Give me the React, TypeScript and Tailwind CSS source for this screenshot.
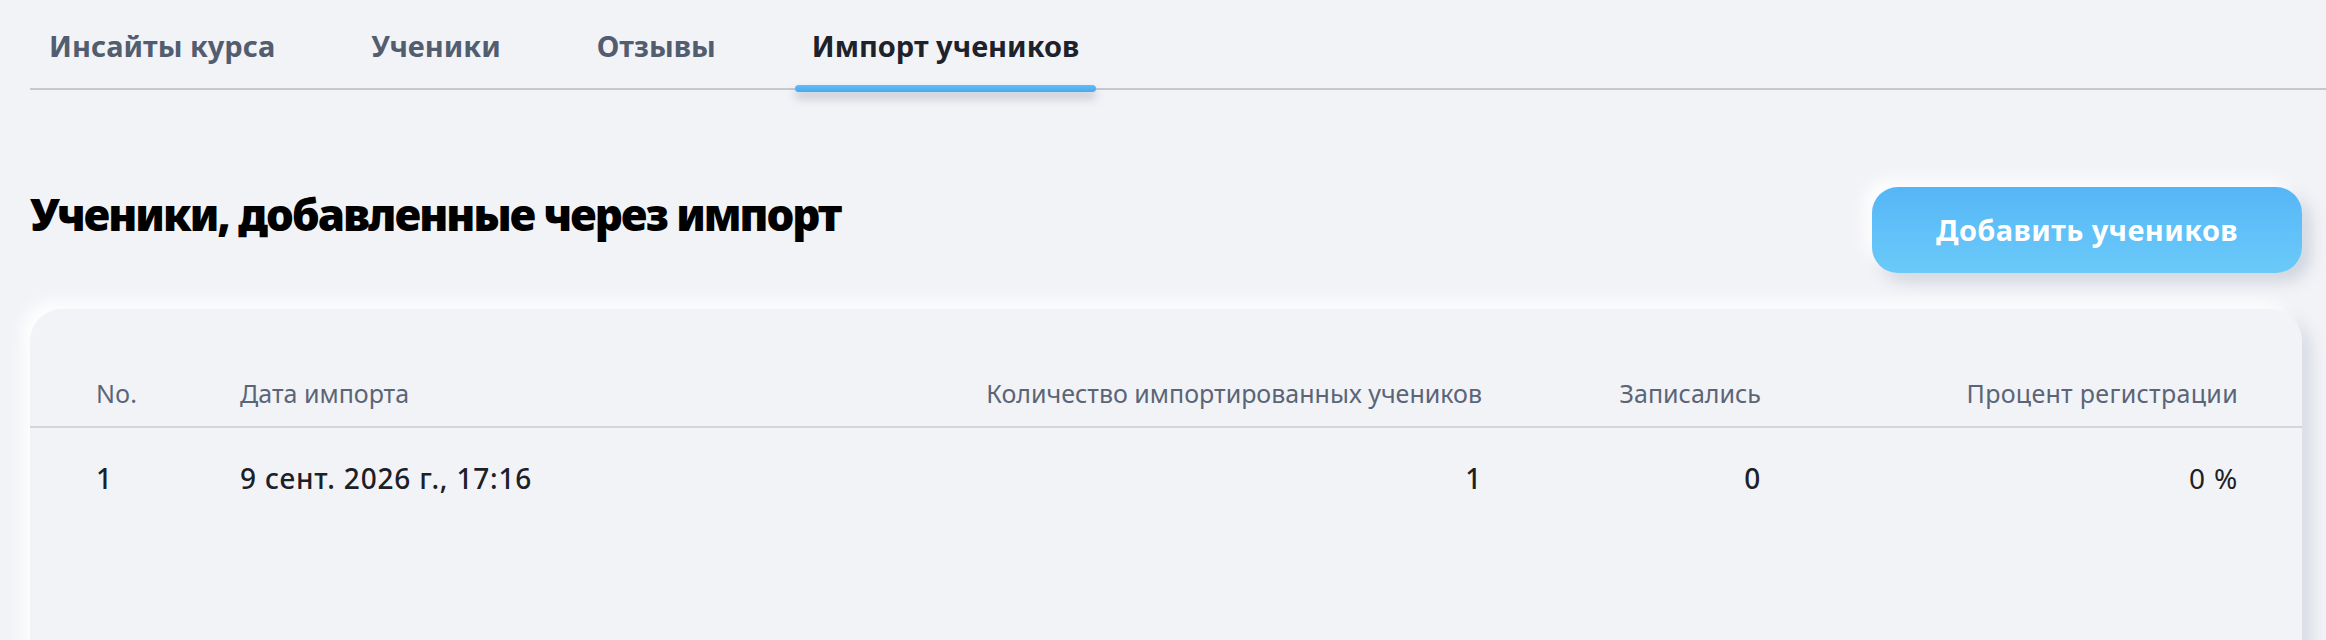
import React from 'react';

const tabs = [
  { id: 'insights', label: 'Инсайты курса' },
  { id: 'students', label: 'Ученики' },
  { id: 'reviews', label: 'Отзывы' },
  { id: 'import', label: 'Импорт учеников' },
];

const imports = [
  { no: 1, date: '9 сент. 2026 г., 17:16', imported: 1, enrolled: 0, rate: '0 %' },
];

const font = { fontFamily: '"Noto Sans", Roboto, sans-serif' };

export default function App() {
  const active = 'import';

  return (
    <div className="min-h-screen bg-[#f2f3f7] pl-[30px]" style={font}>
      {/* Tabs */}
      <div className="flex gap-[62px] border-b-2 border-[#c6c8cb] pl-[2px]">
        {tabs.map(tab => (
          <div key={tab.id} className="relative h-[88px] px-[17px] pt-[27px]">
            <span
              className={`block text-[29px] leading-[38px] font-bold ${
                tab.id === active ? 'text-[#1d222b]' : 'text-[#535d70]'
              }`}
            >
              {tab.label}
            </span>
            {tab.id === active && (
              <div className="absolute left-0 right-0 bottom-[-4px] h-[7px] rounded-full bg-gradient-to-b from-[#5fbdf8] to-[#4aa9f0] shadow-[0_6px_10px_rgba(90,100,120,0.35)]" />
            )}
          </div>
        ))}
      </div>

      <div className="pr-[24px]">
        {/* Title row */}
        <div className="mt-[97px] flex items-start justify-between">
          <h1 className="mt-[1px] text-[44px] leading-[52px] font-black tracking-[-2px] text-black">
            Ученики, добавленные через импорт
          </h1>
          <button className="h-[86px] w-[430px] rounded-[26px] bg-gradient-to-b from-[#55b6f7] to-[#6bcaf9] text-[29px] font-bold tracking-[0.4px] text-white shadow-[-8px_-8px_16px_rgba(255,255,255,0.95),8px_8px_16px_rgba(190,196,208,0.7)]">
            Добавить учеников
          </button>
        </div>

        {/* Table card */}
        <div className="mt-[36px] min-h-[400px] rounded-[32px] bg-[#f2f3f7] shadow-[-8px_-8px_16px_rgba(255,255,255,0.95),8px_8px_16px_rgba(200,205,216,0.75)]">
          <div className="grid grid-cols-[144px_1fr_auto_279px_477px] border-b-2 border-[#d4d6db] pl-[66px] pr-[64px] pt-[66px] pb-[15px] text-[25px] leading-[36px] text-[#5a6577]">
            <div>No.</div>
            <div>Дата импорта</div>
            <div className="text-right">Количество импортированных учеников</div>
            <div className="text-right">Записались</div>
            <div className="text-right tracking-[0.3px]">Процент регистрации</div>
          </div>
          {imports.map(row => (
            <div
              key={row.no}
              className="grid grid-cols-[144px_1fr_auto_279px_477px] pl-[66px] pr-[64px] pt-[32px] text-[28px] leading-[36px] tracking-[0.8px] text-[#1c2027]"
            >
              <div className="font-medium">{row.no}</div>
              <div className="font-medium">{row.date}</div>
              <div className="text-right font-medium">{row.imported}</div>
              <div className="text-right font-medium">{row.enrolled}</div>
              <div className="text-right">{row.rate}</div>
            </div>
          ))}
        </div>
      </div>
    </div>
  );
}
